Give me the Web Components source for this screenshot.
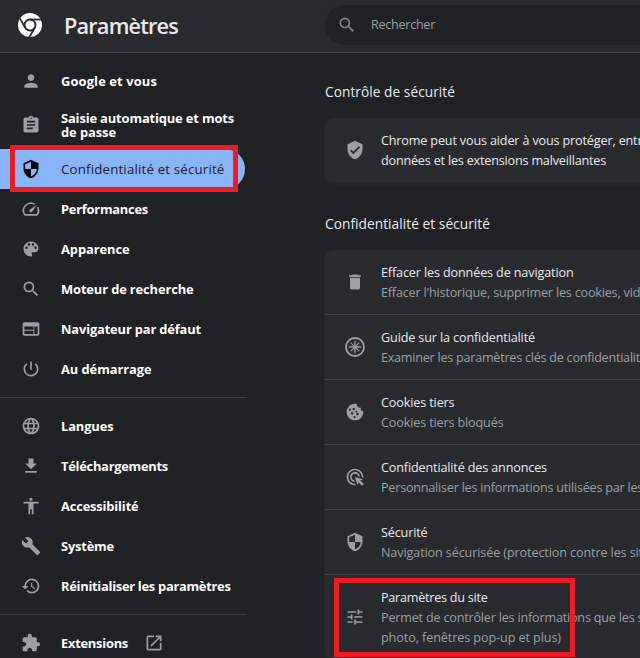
<!DOCTYPE html>
<html lang="fr">
<head>
<meta charset="utf-8">
<title>Paramètres</title>
<style>
html,body{margin:0;height:658px;overflow:hidden;background:#202124}
body{font-family:"Open Sans","Noto Sans",sans-serif;color:#e8eaed}
</style>
</head>
<body>
<settings-app></settings-app>
<script>
const ICONS = {
  person:'<path d="M12 12c2.21 0 4-1.79 4-4s-1.79-4-4-4-4 1.79-4 4 1.79 4 4 4zm0 2c-2.67 0-8 1.34-8 4v2h16v-2c0-2.66-5.33-4-8-4z"/>',
  clipboard:'<path d="M19 3h-4.18C14.4 1.84 13.3 1 12 1s-2.4.84-2.82 2H5c-1.1 0-2 .9-2 2v14c0 1.1.9 2 2 2h14c1.1 0 2-.9 2-2V5c0-1.1-.9-2-2-2zm-7 0c.55 0 1 .45 1 1s-.45 1-1 1-1-.45-1-1 .45-1 1-1zm2 14H7v-2h7v2zm3-4H7v-2h10v2zm0-4H7V7h10v2z"/>',
  security:'<path d="M12 1L3 5v6c0 5.55 3.84 10.74 9 12 5.16-1.26 9-6.45 9-12V5l-9-4zm0 10.99h7c-.53 4.12-3.28 7.79-7 8.94V12H5V6.3l7-3.11v8.8z"/>',
  speed:'<path d="M20.38 8.57l-1.23 1.85a8 8 0 0 1-.22 7.58H5.07A8 8 0 0 1 15.58 6.85l1.85-1.23A10 10 0 0 0 3.35 19a2 2 0 0 0 1.72 1h13.85a2 2 0 0 0 1.74-1 10 10 0 0 0-.27-10.44zm-9.79 6.84a2 2 0 0 0 2.83 0l5.66-8.49-8.49 5.66a2 2 0 0 0 0 2.83z"/>',
  palette:'<path d="M12 3c-4.97 0-9 4.03-9 9s4.03 9 9 9c.83 0 1.5-.67 1.5-1.5 0-.39-.15-.74-.39-1.01-.23-.26-.38-.61-.38-.99 0-.83.67-1.5 1.5-1.5H16c2.76 0 5-2.24 5-5 0-4.42-4.03-8-9-8zm-5.500 9c-.83 0-1.500-.67-1.500-1.500S5.670 9 6.500 9 8 9.670 8 10.500 7.330 12 6.500 12zm3-4C8.670 8 8 7.330 8 6.500S8.670 5 9.500 5s1.500.67 1.500 1.500S10.330 8 9.500 8zm5 0c-.83 0-1.500-.67-1.500-1.500S13.670 5 14.500 5s1.500.67 1.500 1.500S15.330 8 14.500 8zm3 4c-.83 0-1.500-.67-1.500-1.500S16.670 9 17.500 9s1.500.67 1.500 1.500-.67 1.500-1.500 1.500z"/>',
  search:'<path d="M15.500 14h-.79l-.28-.27A6.471 6.471 0 0 0 16 9.500 6.500 6.500 0 1 0 9.500 16c1.610 0 3.090-.59 4.230-1.570l.27.28v.79l5 4.990L20.490 19l-4.990-5zm-6 0C7.010 14 5 11.990 5 9.500S7.010 5 9.500 5 14 7.010 14 9.500 11.990 14 9.500 14z"/>',
  web:'<path d="M20 4H4c-1.100 0-1.990.9-1.990 2L2 18c0 1.100.9 2 2 2h16c1.100 0 2-.9 2-2V6c0-1.100-.9-2-2-2zm-5 14H4v-4h11v4zm0-5H4V9h11v4zm5 5h-4V9h4v9z"/>',
  power:'<path d="M13 3h-2v10h2V3zm4.830 2.170l-1.420 1.420A6.920 6.920 0 0 1 19 12c0 3.870-3.130 7-7 7A6.995 6.995 0 0 1 7.580 6.580L6.170 5.170A8.932 8.932 0 0 0 3 12a9 9 0 0 0 18 0c0-2.740-1.230-5.180-3.170-6.830z"/>',
  globe:'<path d="M11.990 2C6.470 2 2 6.480 2 12s4.470 10 9.990 10C17.520 22 22 17.520 22 12S17.520 2 11.990 2zm6.930 6h-2.950a15.650 15.650 0 0 0-1.380-3.560A8.030 8.030 0 0 1 18.920 8zM12 4.040c.83 1.200 1.480 2.530 1.910 3.960h-3.820c.43-1.430 1.080-2.760 1.910-3.960zM4.260 14C4.100 13.360 4 12.690 4 12s.1-1.360.26-2h3.380c-.08.66-.14 1.320-.14 2s.06 1.340.14 2H4.260zm.82 2h2.950c.32 1.250.78 2.450 1.380 3.560A7.987 7.987 0 0 1 5.080 16zm2.950-8H5.080a7.987 7.987 0 0 1 4.330-3.560A15.650 15.650 0 0 0 8.030 8zM12 19.960c-.83-1.200-1.480-2.530-1.910-3.960h3.820c-.43 1.430-1.080 2.760-1.910 3.960zM14.340 14H9.660c-.09-.66-.16-1.320-.16-2s.07-1.350.16-2h4.680c.09.65.16 1.320.16 2s-.07 1.340-.16 2zm.25 5.560c.6-1.110 1.060-2.310 1.380-3.560h2.950a8.030 8.030 0 0 1-4.330 3.560zM16.360 14c.08-.66.14-1.320.14-2s-.06-1.340-.14-2h3.380c.16.64.26 1.310.26 2s-.1 1.360-.26 2h-3.380z"/>',
  download:'<path d="M19 9h-4V3H9v6H5l7 7 7-7zM5 18v2h14v-2H5z"/>',
  accessibility:'<path d="M12 2c1.100 0 2 .9 2 2s-.9 2-2 2-2-.9-2-2 .9-2 2-2zm9 7h-6v13h-2v-6h-2v6H9V9H3V7h18v2z"/>',
  wrench:'<path d="M22.700 19l-9.100-9.100c.9-2.300.4-5-1.500-6.900-2-2-5-2.400-7.400-1.300L9 6 6 9 1.600 4.700C.4 7.100.9 10.100 2.900 12.100c1.900 1.900 4.600 2.400 6.900 1.500l9.100 9.100c.4.4 1 .4 1.400 0l2.300-2.300c.5-.4.5-1.100.1-1.400z"/>',
  history:'<path d="M13 3a9 9 0 0 0-9 9H1l3.890 3.890.07.14L9 12H6c0-3.870 3.130-7 7-7s7 3.130 7 7-3.130 7-7 7c-1.930 0-3.680-.79-4.940-2.060l-1.420 1.420A8.954 8.954 0 0 0 13 21a9 9 0 0 0 0-18zm-1 5v5l4.280 2.540.72-1.210-3.500-2.080V8H12z"/>',
  extension:'<path d="M20.500 11H19V7c0-1.100-.9-2-2-2h-4V3.500a2.500 2.500 0 0 0-5 0V5H4c-1.100 0-1.990.9-1.990 2v3.800H3.500c1.490 0 2.700 1.210 2.700 2.700s-1.210 2.700-2.700 2.700H2V20c0 1.100.9 2 2 2h3.800v-1.500c0-1.490 1.210-2.700 2.700-2.700s2.700 1.210 2.700 2.700V22H17c1.100 0 2-.9 2-2v-4h1.500a2.500 2.500 0 0 0 0-5z"/>',
  launch:'<path d="M19 19H5V5h7V3H5a2 2 0 0 0-2 2v14a2 2 0 0 0 2 2h14c1.100 0 2-.9 2-2v-7h-2v7zM14 3v2h3.590l-9.830 9.830 1.410 1.410L19 6.410V10h2V3h-7z"/>',
  verified:'<path d="M12 1L3 5v6c0 5.550 3.840 10.740 9 12 5.160-1.260 9-6.450 9-12V5l-9-4zm-2 16l-4-4 1.410-1.410L10 14.170l6.590-6.590L18 9l-8 8z"/>',
  trash:'<path d="M6 19c0 1.100.9 2 2 2h8c1.100 0 2-.9 2-2V7H6v12zM19 4h-3.500l-1-1h-5l-1 1H5v2h14V4z"/>',
  compass:'<g fill="none" stroke="currentColor"><circle cx="12" cy="12" r="10.800" stroke-width="2.200"/><path stroke-width="1.600" d="M12 4.500v15M4.500 12h15"/><path stroke-width="1.500" d="M7 7l3.600 3.600M13.400 13.400L17 17M17 7l-3.600 3.600M10.600 13.400L7 17"/></g><circle cx="12" cy="12" r="1.900"/>',
  cookie:'<path fill-rule="evenodd" d="M21.950 10.990c-1.790-.03-3.700-1.950-2.680-4.220-2.970 1-5.780-1.590-5.190-4.560C7.110.74 2 6.410 2 12c0 5.520 4.480 10 10 10 5.890 0 10.540-5.080 9.950-11.010zM8.500 15a1.500 1.500 0 1 1 0-3 1.500 1.500 0 0 1 0 3zm2-5a1.500 1.500 0 1 1 0-3 1.500 1.500 0 0 1 0 3zm4.500 6a1.500 1.500 0 1 1 0-3 1.500 1.500 0 0 1 0 3zM6 10.500a1.300 1.300 0 1 1 0-2.600 1.300 1.300 0 0 1 0 2.600zm5.500 9a1.300 1.300 0 1 1 0-2.600 1.300 1.300 0 0 1 0 2.600zm2-7a1.100 1.100 0 1 1 0-2.200 1.100 1.100 0 0 1 0 2.200z"/>',
  ads:'<path d="M11.710 17.990A5.993 5.993 0 0 1 6 12c0-3.310 2.690-6 6-6 3.220 0 5.840 2.530 5.990 5.710l-2.100-.63a3.999 3.999 0 1 0-4.810 4.810l.63 2.100zM22 12c0 .3-.01.6-.04.9l-1.970-.59c.01-.1.010-.21.010-.31 0-4.420-3.580-8-8-8s-8 3.580-8 8 3.580 8 8 8c.1 0 .21 0 .31-.01l.59 1.970c-.3.030-.6.040-.9.040-5.520 0-10-4.480-10-10S6.480 2 12 2s10 4.480 10 10zm-3.770 4.260L22 15l-10-3 3 10 1.260-3.770 4.270 4.270 1.980-1.980-4.280-4.260z"/>',
  tune:'<path d="M3 17v2h6v-2H3zM3 5v2h10V5H3zm10 16v-2h8v-2h-8v-2h-2v6h2zM7 9v2H3v2h4v2h2V9H7zm14 4v-2H11v2h10zm-6-4h2V7h4V5h-4V3h-2v6z"/>'
};
const define = (name, html, setup) => {
  const t = document.createElement('template');
  t.innerHTML = html;
  customElements.define(name, class extends HTMLElement {
    connectedCallback() {
      if (this.shadowRoot) return;
      this.attachShadow({mode:'open'}).append(t.content.cloneNode(true));
      if (setup) setup(this, this.shadowRoot);
    }
  });
};

define('ui-icon', `<style>:host{display:block;flex:none;width:20px;height:20px}svg{display:block;width:100%;height:100%;fill:currentColor;overflow:visible}</style><svg viewBox="0 0 24 24" aria-hidden="true"></svg>`,
  (el, root) => { root.querySelector('svg').innerHTML = ICONS[el.getAttribute('name')]; });

/* A single line whose tracking makes its first "chars" characters span "span" pixels. */
define('fit-line', `<style>:host{display:block;white-space:pre}</style><slot></slot>`,
  (el) => {
    const node = el.firstChild, n = +el.getAttribute('chars') || node.length;
    const r = document.createRange();
    r.setStart(node, 0); r.setEnd(node, n);
    const natural = r.getBoundingClientRect().width;
    el.style.letterSpacing = ((+el.getAttribute('span') - natural) / n).toFixed(3) + 'px';
  });

define('nav-item', `<style>
:host{display:flex;align-items:center;box-sizing:border-box;height:40px;width:245px;padding-left:21px;gap:20px;font:700 12.900px/14px "Open Sans",sans-serif;color:#fff}
:host([tall]){height:48px}
:host([selected]){background:#8ab4f8;color:#202124;border-radius:0 20px 20px 0;font-weight:500;font-size:13.300px}
ui-icon{color:#9aa0a6}
:host([selected]) ui-icon{color:#000}
.ext{margin-left:-4px}
</style><div class="i"></div><div><slot></slot></div>`,
  (el, root) => {
    const i = document.createElement('ui-icon');
    i.setAttribute('name', el.getAttribute('icon'));
    root.querySelector('.i').append(i);
    if (el.hasAttribute('external')) {
      const x = document.createElement('ui-icon');
      x.className = 'ext'; x.setAttribute('name', 'launch');
      root.append(x);
    }
  });

define('setting-row', `<style>
:host{display:flex;align-items:center;box-sizing:border-box;height:65px;padding-left:20px;gap:16px;border-bottom:1px solid #3f4042;font-size:12.600px;line-height:20px;color:#e8eaed}
:host(:last-of-type){border-bottom:0;padding-bottom:1px}
:host([tall]){height:85px}
ui-icon{color:#9aa0a6}
.t{padding-top:1px;margin-bottom:-1px}
.d{color:#9aa0a6}
</style><div class="i"></div><div class="t"><slot></slot><div class="d"><slot name="detail"></slot></div></div>`,
  (el, root) => {
    const i = document.createElement('ui-icon');
    i.setAttribute('name', el.getAttribute('icon'));
    root.querySelector('.i').append(i);
  });

define('setting-card', `<style>:host{display:block;width:680px;background:#292a2d;border-radius:8px;box-shadow:0 1px 3px 1px #26272a}</style><slot></slot>`);
define('section-title', `<style>:host{display:flex;align-items:center;height:20px;font-size:13.700px;color:#e8eaed}</style><slot></slot>`);

define('chrome-logo', `<style>:host{display:block;width:24px;height:24px}svg{display:block}</style>
<svg width="24" height="24" viewBox="-12 -12 24 24"><circle r="12" fill="#fff"/><circle r="5.500" fill="#fff" stroke="#292a2d" stroke-width="1.900"/><g stroke="#292a2d" stroke-width="1.800"><path d="M0-5.500H12"/><path d="M0-5.500H12" transform="rotate(120)"/><path d="M0-5.500H12" transform="rotate(240)"/></g></svg>`);

define('top-bar', `<style>
:host{display:grid;grid-template-columns:325px 1fr;align-items:center;box-sizing:border-box;height:53px;background:#292a2d;border-bottom:1px solid #46474a}
.brand{display:flex;align-items:center;gap:22px;padding:0 0 2px 18px;height:50px;font-weight:600;font-size:21.700px}
.search{display:flex;align-items:center;gap:14px;height:40px;margin-bottom:2px;padding-left:12px;background:#202124;border-radius:20px 0 0 20px;color:#9aa0a6;font-size:12.600px}
.search ui-icon{color:#80868b}
.search fit-line{padding-bottom:2px}
</style>
<div class="brand"><chrome-logo></chrome-logo><fit-line span="114">Paramètres</fit-line></div>
<div class="search"><ui-icon name="search"></ui-icon><fit-line span="64">Rechercher</fit-line></div>`);

define('side-nav', `<style>:host{display:block;padding-top:8px;width:247px}hr{border:0;height:1px;margin:8px 0;background:#3c4043}</style>
<nav>
<nav-item icon="person"><fit-line span="96">Google et vous</fit-line></nav-item>
<nav-item icon="clipboard" tall><fit-line span="173">Saisie automatique et mots</fit-line><fit-line span="55">de passe</fit-line></nav-item>
<nav-item icon="security" selected><fit-line span="163.500">Confidentialité et sécurité</fit-line></nav-item>
<nav-item icon="speed"><fit-line span="87">Performances</fit-line></nav-item>
<nav-item icon="palette"><fit-line span="68.500">Apparence</fit-line></nav-item>
<nav-item icon="search"><fit-line span="132.500">Moteur de recherche</fit-line></nav-item>
<nav-item icon="web"><fit-line span="140">Navigateur par défaut</fit-line></nav-item>
<nav-item icon="power"><fit-line span="90.500">Au démarrage</fit-line></nav-item>
<hr>
<nav-item icon="globe"><fit-line span="52.500">Langues</fit-line></nav-item>
<nav-item icon="download"><fit-line span="107">Téléchargements</fit-line></nav-item>
<nav-item icon="accessibility"><fit-line span="77.500">Accessibilité</fit-line></nav-item>
<nav-item icon="wrench"><fit-line span="53">Système</fit-line></nav-item>
<nav-item icon="history"><fit-line span="169.500">Réinitialiser les paramètres</fit-line></nav-item>
<hr>
<nav-item icon="extension" external><fit-line span="67">Extensions</fit-line></nav-item>
</nav>`);

define('main-panel', `<style>:host{display:block;padding-top:28px;min-width:0}section-title{margin-bottom:17px}setting-card+section-title{margin-top:30px}</style>
<section-title><fit-line span="130">Contrôle de sécurité</fit-line></section-title>
<setting-card><setting-row icon="verified"><fit-line span="234.500" chars="39">Chrome peut vous aider à vous protéger, entre</fit-line><fit-line span="225">données et les extensions malveillantes</fit-line></setting-row></setting-card>
<section-title><fit-line span="165">Confidentialité et sécurité</fit-line></section-title>
<setting-card>
<setting-row icon="trash"><fit-line span="192.500">Effacer les données de navigation</fit-line><fit-line slot="detail" span="239.500" chars="44">Effacer l'historique, supprimer les cookies, vider</fit-line></setting-row>
<setting-row icon="compass"><fit-line span="154">Guide sur la confidentialité</fit-line><fit-line slot="detail" span="259" chars="46">Examiner les paramètres clés de confidentialité</fit-line></setting-row>
<setting-row icon="cookie"><fit-line span="73.500">Cookies tiers</fit-line><fit-line slot="detail" span="122.500">Cookies tiers bloqués</fit-line></setting-row>
<setting-row icon="ads"><fit-line span="166">Confidentialité des annonces</fit-line><fit-line slot="detail" span="243.500" chars="44">Personnaliser les informations utilisées par les</fit-line></setting-row>
<setting-row icon="security"><fit-line span="46.500">Sécurité</fit-line><fit-line slot="detail" span="245.500" chars="43">Navigation sécurisée (protection contre les sites</fit-line></setting-row>
<setting-row icon="tune" tall><fit-line span="106.500">Paramètres du site</fit-line><fit-line slot="detail" span="253.500" chars="44">Permet de contrôler les informations que les sites</fit-line><fit-line slot="detail" span="180">photo, fenêtres pop-up et plus)</fit-line></setting-row>
</setting-card>`);

define('highlight-box', `<style>:host{position:absolute;box-sizing:border-box;border:5px solid #ed1c24;pointer-events:none}</style>`);

define('settings-app', `<style>
:host{display:block;position:relative;width:640px;height:658px;overflow:hidden;background:#202124}
.body{display:grid;grid-template-columns:325px 1fr}
.nav-mark{left:10px;top:145px;width:228px;height:47px}
.site-mark{left:334px;top:578px;width:241px;height:79px}
</style>
<top-bar></top-bar>
<div class="body"><side-nav></side-nav><main-panel></main-panel></div>
<highlight-box class="nav-mark"></highlight-box><highlight-box class="site-mark"></highlight-box>`);
</script>
</body>
</html>
